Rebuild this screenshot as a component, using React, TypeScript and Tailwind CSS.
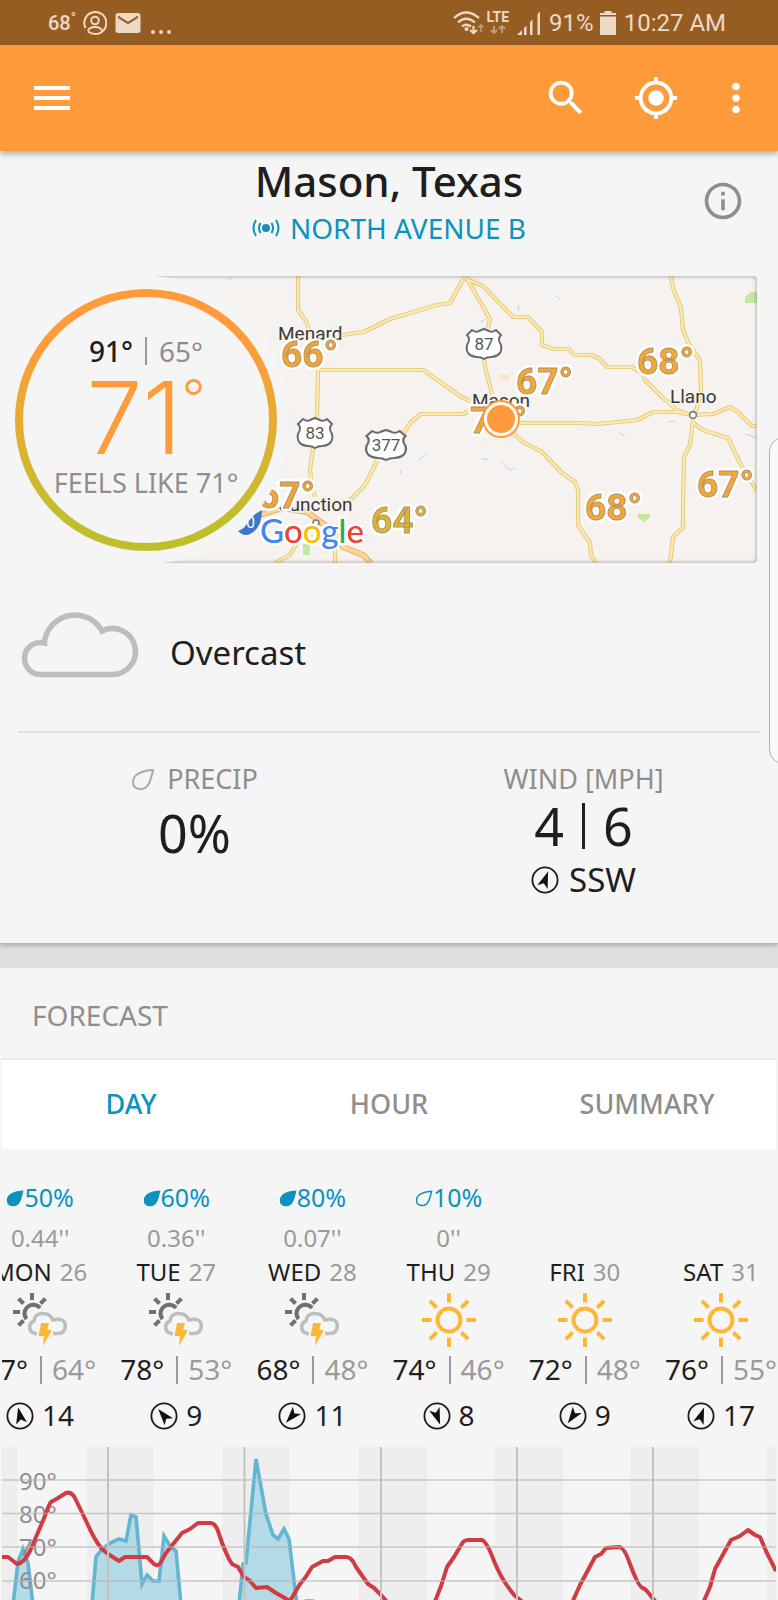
import { useState, type ReactNode } from "react";
import { MdEmail, MdGpsFixed, MdInfoOutline, MdMenu, MdMoreVert, MdSearch } from "react-icons/md";

type Day = {
  name: string;
  date: number;
  chance?: string;
  amount?: string;
  filled?: boolean;
  icon: "storm" | "sun";
  high: number;
  low: number;
  wind: number;
  heading: number;
};

const DAYS: Day[] = [
  { name: "MON", date: 26, chance: "50%", amount: "0.44''", filled: true, icon: "storm", high: 87, low: 64, wind: 14, heading: -12 },
  { name: "TUE", date: 27, chance: "60%", amount: "0.36''", filled: true, icon: "storm", high: 78, low: 53, wind: 9, heading: -40 },
  { name: "WED", date: 28, chance: "80%", amount: "0.07''", filled: true, icon: "storm", high: 68, low: 48, wind: 11, heading: 222 },
  { name: "THU", date: 29, chance: "10%", amount: "0''", icon: "sun", high: 74, low: 46, wind: 8, heading: 160 },
  { name: "FRI", date: 30, icon: "sun", high: 72, low: 48, wind: 9, heading: 215 },
  { name: "SAT", date: 31, icon: "sun", high: 76, low: 55, wind: 17, heading: 20 },
];

const TABS = ["DAY", "HOUR", "SUMMARY"];

const ROADS = [
  "M298 276V310L306 321L310 334",
  "M342 335L364 332L390 319L417 311L437 305L450 303L465 276",
  "M466 277L490 319L488 328",
  "M484 360L486 371L492 394",
  "M466 279L483 286L513 317H528L542 332V345L553 349H569L574 355H591L600 359L607 367H632L643 374L645 380L663 398L677 410L688 414",
  "M671 276L673 288L681 308L683 330L689 344L700 360L701 390L697 408L693 416",
  "M320 370H423L443 384L460 396L470 401",
  "M318 370L317 417",
  "M313 448L310 470L312 487L315 497",
  "M469 411L463 414H421L411 422L403 434",
  "M377 461L365 485L350 500",
  "M520 423H580L597 424L637 420L653 412H677L693 415L713 414L730 407L738 412L752 426H757",
  "M513 433L523 442L542 452L562 473L575 482L578 490V525L590 543L591 555L596 563",
  "M693 420L690 445L684 457L683 503V527L673 537L670 563",
  "M693 423L705 431L728 438L740 463L757 491",
  "M297 543L290 555L275 563",
  "M335 545V563",
];

const STATIONS = [
  { x: 281, y: 367, text: "66°", fill: "#f0a437" },
  { x: 258, y: 508, text: "67°", fill: "#f0a437" },
  { x: 371, y: 533, text: "64°", fill: "#dcb335" },
  { x: 516, y: 394, text: "67°", fill: "#f5a638" },
  { x: 637, y: 374, text: "68°", fill: "#f5a638" },
  { x: 470, y: 433, text: "71°", fill: "#f5a638" },
  { x: 585, y: 520, text: "68°", fill: "#f5a638" },
  { x: 697, y: 497, text: "67°", fill: "#f5a638" },
];

const GOOGLE = [
  ["G", "#4285f4"],
  ["o", "#ea4335"],
  ["o", "#fbbc05"],
  ["g", "#4285f4"],
  ["l", "#34a853"],
  ["e", "#ea4335"],
];

function Drop({ filled, className }: { filled?: boolean; className: string }) {
  return (
    <svg viewBox="0 0 24 24" className={className} aria-hidden="true">
      <path
        d="M22 3C12 3.500 2 7 2 15C2 20 5.500 22 10 22C18 22 20 12 22 3Z"
        fill={filled ? "currentColor" : "none"}
        stroke="currentColor"
        strokeWidth="2"
        strokeLinejoin="miter"
      />
    </svg>
  );
}

function WindArrow({ heading }: { heading: number }) {
  return (
    <svg viewBox="0 0 28 28" className="size-7 shrink-0" aria-hidden="true">
      <circle cx="14" cy="14" r="12.600" fill="none" stroke="#1c1c1c" strokeWidth="1.800" />
      <path d="M14 5L19.500 21.500L14 17.500L8.500 21.500Z" fill="#111" transform={`rotate(${heading} 14 14)`} />
    </svg>
  );
}

function SunIcon() {
  return (
    <svg viewBox="0 0 54 54" className="size-[54px]" aria-hidden="true">
      <g stroke="#fbb735" strokeWidth="4" fill="none">
        <circle cx="27" cy="27" r="11.500" />
        {[0, 45, 90, 135, 180, 225, 270, 315].map((angle) => (
          <path key={angle} d="M27 0V9.500" transform={`rotate(${angle} 27 27)`} />
        ))}
      </g>
    </svg>
  );
}

function StormIcon() {
  return (
    <svg viewBox="0 0 54 54" className="size-[54px]" aria-hidden="true">
      <g stroke="#707070" strokeWidth="4" fill="none">
        <path d="M13.500 26A8.500 8.500 0 1 1 27 15" />
        {[-135, -90, -45, 0, 45].map((angle) => (
          <path key={angle} d="M19 0V7" transform={`rotate(${angle} 19 19)`} />
        ))}
      </g>
      <path
        d="M24 40.500H22A6.500 6.500 0 0 1 21 28Q22 20.500 30 20.500Q37 20.500 40 27Q52 24 52.500 33Q52 40.500 44 40.500H40"
        fill="none"
        stroke="#bdbdbd"
        strokeWidth="3.600"
      />
      <path d="M28 30H36L34 37H39L30 53L31 43H25.500Z" fill="#fbb735" />
    </svg>
  );
}

function RouteShield({ x, y, wide, label }: { x: number; y: number; wide?: boolean; label: string }) {
  const s = wide ? 1.15 : 1;
  return (
    <g transform={`translate(${x} ${y})`}>
      <path
        transform={`scale(${s} 1)`}
        d="M-12 -14Q-8 -11 -5 -13Q-3 -14 0 -15Q3 -14 5 -13Q8 -11 12 -14L17 -9Q13 -5 17 1Q19 12 7 13Q3 13 0 15Q-3 13 -7 13Q-19 12 -17 1Q-13 -5 -17 -9Z"
        fill="#fff"
        stroke="#6a6a6a"
        strokeWidth="2"
      />
      <text y="6" textAnchor="middle" fontSize="17" fill="#555">
        {label}
      </text>
    </g>
  );
}

function StationMap() {
  return (
    <svg
      viewBox="155 276 602 287"
      preserveAspectRatio="xMaxYMid slice"
      className="block h-[287px] w-full rounded-sm bg-[#f6f2ef] font-['Roboto',sans-serif]"
      role="img"
      aria-label="Station map"
    >
      <g fill="#c5e5a3">
        <path d="M745 297L751 292H757V303H745Z" />
        <path d="M638 514H650V517L644 522L638 518Z" />
        <path d="M303 544H310V555H303Z" />
      </g>
      <path d="M499 374L510 375L508 382L500 379Z" fill="#fce4cc" />
      <path
        d="M556 296L560 299M519 311L518 305M480 322L486 319M419 460L427 453M482 459L488 459M500 461L510 470L515 468M400 474L402 469M619 433L625 436M669 422L675 421M745 434L757 438M231 280L228 278"
        stroke="#a9d9ee"
        strokeWidth="1"
        fill="none"
      />
      <g fill="none" strokeLinejoin="round">
        {ROADS.map((d) => <path key={d} d={d} stroke="#e3c877" strokeWidth="4.200" />)}
        {ROADS.map((d) => <path key={d} d={d} stroke="#fbe9b0" strokeWidth="2.400" />)}
        <path d="M260 515L283 508L307 512L333 531L343 547L363 555L371 563" stroke="#e9b46a" strokeWidth="6" />
        <path d="M260 515L283 508L307 512L333 531L343 547L363 555L371 563" stroke="#fbd59a" strokeWidth="3.600" />
      </g>

      <RouteShield x={484} y={344} label="87" />
      <RouteShield x={315} y={433} label="83" />
      <RouteShield x={386} y={445} wide label="377" />
      <path d="M238 531Q246 529 250 517L262 510Q262 528 250 534Q244 537 238 531Z" fill="#3d78c6" />
      <text x="246" y="528" fontSize="16" fill="#fff">0</text>

      <g fontSize="19" fill="#3c3a35" stroke="#f6f2ef" strokeWidth="3" paintOrder="stroke">
        <text x="278" y="340">Menard</text>
        <text x="472" y="407">Mason</text>
        <text x="670" y="403">Llano</text>
        <text x="279" y="511">Junction</text>
      </g>
      <circle cx="693" cy="415" r="3.400" fill="#fff" stroke="#777" strokeWidth="1.600" />
      <circle cx="316" cy="523" r="3" fill="#fff" stroke="#777" strokeWidth="1.600" />

      <g
        fontSize="37"
        fontWeight="700"
        stroke="#a88f63"
        className="[filter:drop-shadow(2px_0_0_#fff)_drop-shadow(-2px_0_0_#fff)_drop-shadow(0_2px_0_#fff)_drop-shadow(0_-2px_0_#fff)]"
      >
        {STATIONS.map((s) => (
          <text key={`${s.x}-${s.y}`} x={s.x} y={s.y} fill={s.fill} strokeWidth="0.800">{s.text}</text>
        ))}
      </g>

      <circle cx="501" cy="419" r="18" fill="#fff" stroke="#ff9b3b" strokeWidth="2" />
      <circle cx="501" cy="419" r="14" fill="#ff9b3b" />

      <text x="260" y="543" fontSize="33" fontWeight="500" stroke="#fff" strokeWidth="5" paintOrder="stroke" className="font-['Lato',sans-serif]">
        {GOOGLE.map(([letter, color], i) => <tspan key={i} fill={color}>{letter}</tspan>)}
      </text>
    </svg>
  );
}

function TemperatureDial() {
  return (
    <div className="absolute top-0 left-0.5 grid size-72 place-items-center rounded-full bg-[#f5f5f5]">
      <div className="size-[262px] rounded-full bg-linear-to-b from-[#ff9b3b] from-20% to-[#bfbf2c] to-90% p-2">
        <div className="flex size-full flex-col items-center rounded-full bg-[#f5f5f5] pt-[38px]">
          <p className="flex items-center gap-3 text-[28px] leading-8">
            <span className="font-medium">91°</span>
            <span className="h-7 w-0.5 bg-[#999]" />
            <span className="text-[#8e8e8e]">65°</span>
          </p>
          <p className="mt-0.5 flex items-start font-['Inter',sans-serif] text-[100px] leading-[98px] font-light text-[#ff9b3b]">
            71<span className="text-[52px] leading-[60px]">°</span>
          </p>
          <p className="text-[27px] leading-8 text-[#8e8e8e]">FEELS LIKE 71°</p>
        </div>
      </div>
    </div>
  );
}

const TEMPERATURE_LINE =
  "M2 1556H8L17 1563Q24 1562 30 1550L45 1515Q49 1503 51 1501L58 1497L66 1492Q72 1490 76 1499L87 1522Q95 1540 102 1548L108 1553L119 1560L125 1556H147L154 1563Q158 1566 161 1561L166 1552L182 1532L190 1528L198 1522H210Q216 1522 219 1533Q226 1554 232 1563L238 1566L244 1576L250 1580L256 1587L267 1586L276 1592L290 1600L300 1583L305 1577L312 1566L323 1560H328L335 1556H346Q352 1556 356 1566L368 1583L374 1587L381 1594L388 1602L410 1625L434 1603L441 1585L447 1566L454 1556L463 1541Q465 1539 468 1539H482Q487 1541 494 1560Q502 1580 515 1595L523 1601L550 1625L572 1602L580 1584L595 1556L601 1553L606 1547L620 1546Q625 1548 630 1563Q639 1587 643 1587L646 1589L655 1600L680 1625L703 1602L710 1586L715 1568L731 1539L740 1535L748 1529L755 1534L760 1536L766 1550L776 1570";

const RAIN_AREAS = [
  "M13 1604L18 1561L23 1548L28 1562L33 1604",
  "M92 1604L96 1556L102 1548L112 1541L119 1538L126 1540L131 1514L136 1516L142 1583L147 1574L153 1580H159L164 1535L170 1545L176 1550L181 1604",
  "M239 1604L243 1563L246 1562L256 1458L266 1513L273 1534L278 1538L284 1528L289 1538L297 1604",
  "M303 1604L306 1600H313L315 1604",
];

function ForecastChart() {
  return (
    <svg
      viewBox="2 1446 774 154"
      preserveAspectRatio="none"
      className="block h-[154px] w-full"
      role="img"
      aria-label="Temperature and precipitation"
    >
      <g fill="#eeeeee">
        {[[2, 16], [87, 67], [222, 68], [358, 69], [495, 68], [630, 69], [767, 9]].map(([x, width]) => (
          <rect key={x} x={x} y="1446" width={width} height="154" />
        ))}
      </g>
      {RAIN_AREAS.map((d) => (
        <path key={d} d={d} fill="#a9d6e3" fillOpacity="0.850" stroke="#62b5d3" strokeWidth="3.600" />
      ))}
      <g fontSize="24" fill="#8e8e8e">
        <text x="19" y="1489">90°</text>
        <text x="19" y="1522">80°</text>
        <text x="19" y="1555">70°</text>
        <text x="19" y="1588">60°</text>
      </g>
      <path d={TEMPERATURE_LINE} fill="none" stroke="#d13b43" strokeWidth="4" strokeLinejoin="round" />
      <g stroke="#b5b5b5" strokeOpacity="0.700" strokeWidth="1.500">
        {[1479, 1512.5, 1546, 1580].map((y) => <path key={y} d={`M2 ${y}H776`} />)}
      </g>
      <g stroke="#c3c3c3" strokeWidth="2">
        {[108, 244.5, 381, 517, 653].map((x) => <path key={x} d={`M${x} 1446V1600`} />)}
      </g>
    </svg>
  );
}

function DayColumn({ day }: { day: Day }) {
  return (
    <li className="flex min-w-0 flex-1 flex-col items-center text-2xl whitespace-nowrap">
      <p className="flex h-9 items-center text-[25px] text-[#0d92bd]">
        {day.chance ? (
          <>
            <Drop filled={day.filled} className="size-[18px]" />
            {day.chance}
          </>
        ) : null}
      </p>
      <p className="mt-1 h-[34px] leading-9 text-[#9a9a9a]">{day.amount}</p>
      <p className="flex h-9 items-center gap-2 leading-9">
        {day.name}
        <span className="text-[#9a9a9a]">{day.date}</span>
      </p>
      <div className="mt-[3px]">{day.icon === "sun" ? <SunIcon /> : <StormIcon />}</div>
      <p className="mt-[3px] flex h-10 items-center text-[28px]">
        {day.high}°
        <span className="mr-2.5 ml-3 h-7 w-0.5 bg-[#999]" />
        <span className="text-[#9a9a9a]">{day.low}°</span>
      </p>
      <p className="mt-2 flex h-9 items-center gap-2 text-[28px]">
        <WindArrow heading={day.heading} />
        {day.wind}
      </p>
    </li>
  );
}

function StatusBar() {
  return (
    <div className="flex h-[45px] items-center bg-[#965d23] pr-[52px] pl-12 font-['Roboto',sans-serif] text-2xl text-[#ecd9c6]">
      <span className="text-xl font-medium">
        68<sup className="text-sm">°</sup>
      </span>
      <svg viewBox="0 0 24 24" className="ml-[7px] size-6" fill="none" stroke="currentColor" strokeWidth="2" aria-hidden="true">
        <path d="M2.500 17A11 11 0 1 1 12 23Q8 23 5 20.500" />
        <circle cx="12" cy="9.500" r="3.800" />
        <path d="M5 20Q6 16 12 16T19 20" />
      </svg>
      <MdEmail className="ml-1.5 size-[30px]" />
      <svg viewBox="0 0 20 20" className="ml-2 size-5 self-end" fill="currentColor" aria-hidden="true">
        <circle cx="2" cy="7" r="2" />
        <circle cx="10" cy="7" r="2" />
        <circle cx="18" cy="7" r="2" />
      </svg>

      <div className="ml-auto flex items-center">
        <svg viewBox="0 0 32 24" className="h-6 w-8" fill="none" stroke="currentColor" strokeWidth="2.200" aria-hidden="true">
          <path d="M1 7Q13 -4 26 7M5 11.500Q13 4 22 11.500M9 15.500Q13 12 18 15.500" />
          <circle cx="13.500" cy="18" r="1" fill="currentColor" />
          <path d="M20.500 15V22M17 19L20.500 22L24 19" />
          <path d="M28 21V14M25.500 16.500L28 14L30.500 16.500" strokeOpacity="0.500" strokeWidth="1.600" />
        </svg>
        <span className="ml-0.5 flex flex-col items-center text-sm leading-3 font-bold">
          LTE
          <svg viewBox="0 0 16 9" className="mt-0.5 h-[9px] w-4" fill="none" stroke="currentColor" strokeWidth="2" opacity="0.500" aria-hidden="true">
            <path d="M4 1V7M1 5L4 8L7 5M12 8V2M9 4L12 1L15 4" />
          </svg>
        </span>
        <svg viewBox="0 0 24 24" className="ml-2 size-6" fill="currentColor" aria-hidden="true">
          <path d="M0 24L5 19V24ZM7 17L9.500 14.500V24H7ZM13 11L15.500 8.500V24H13ZM20.500 3L23 0.500V24H20.500Z" />
        </svg>
        <span className="ml-2">91%</span>
        <svg viewBox="0 0 16 24" className="ml-1.5 h-6 w-4" fill="currentColor" aria-hidden="true">
          <path d="M4.500 0H11.500V2H16V4H0V2H4.500ZM0 5.500H16V24H0Z" />
        </svg>
        <span className="ml-2">10:27 AM</span>
      </div>
    </div>
  );
}

function IconButton({ label, className = "", children }: { label: string; className?: string; children: ReactNode }) {
  return (
    <button type="button" aria-label={label} className={className}>
      {children}
    </button>
  );
}

export default function App() {
  const [tab, setTab] = useState("DAY");

  return (
    <div className="relative min-h-screen overflow-hidden bg-[#f5f5f5] font-['Noto_Sans',sans-serif] text-[#1e1e1e]">
      <StatusBar />
      <header className="relative flex h-[106px] items-center bg-[#ff9b3b] pr-[19px] pl-7 text-white shadow-[0_3px_6px_rgba(0,0,0,0.3)]">
        <IconButton label="Menu">
          <MdMenu className="size-12" />
        </IconButton>
        <IconButton label="Search" className="ml-auto">
          <MdSearch className="size-[46px]" />
        </IconButton>
        <IconButton label="My location" className="ml-11">
          <MdGpsFixed className="size-[46px]" />
        </IconButton>
        <IconButton label="More options" className="ml-[34px]">
          <MdMoreVert className="size-[46px]" />
        </IconButton>
      </header>

      <main>
        <section className="relative border-b border-[#b5b5b5] pb-[38px] shadow-[0_2px_4px_rgba(0,0,0,0.2)]">
          <div className="relative pt-[3px] text-center">
            <h1 className="text-[42px] leading-[54px] font-medium">Mason, Texas</h1>
            <a href="#station" className="mt-0.5 flex items-center justify-center gap-2.5 text-[28px] leading-9 text-[#0d92bd]">
              <svg viewBox="0 0 28 20" className="h-5 w-7" fill="none" stroke="currentColor" strokeWidth="2" aria-hidden="true">
                <circle cx="14" cy="10" r="4" fill="currentColor" stroke="none" />
                <path d="M8.500 5Q5.500 10 8.500 15M4 2Q-1 10 4 18M19.500 5Q22.500 10 19.500 15M24 2Q29 10 24 18" />
              </svg>
              NORTH AVENUE B
            </a>
            <IconButton label="Station info" className="absolute top-7 right-[33px] text-[#8e8e8e]">
              <MdInfoOutline className="size-11" />
            </IconButton>
          </div>

          <div className="relative mt-[30px] pr-[21px] pl-[155px]">
            <div className="relative">
              <StationMap />
              <div className="pointer-events-none absolute inset-0 rounded-sm shadow-[inset_0_0_4px_rgba(0,0,0,0.4)]" />
            </div>
            <TemperatureDial />
          </div>

          <div className="flex items-center px-5 pt-[43px]">
            <svg viewBox="20 606 120 72" className="h-[72px] w-[120px]" fill="none" stroke="#bdbdbd" strokeWidth="5.500" aria-hidden="true">
              <path d="M41 674.500H113A23 23 0 1 0 102 631A31 31.500 0 0 0 44.500 641V643A16 16 0 1 0 41 674.500Z" />
            </svg>
            <p className="ml-[30px] pt-[22px] text-[33px] leading-10">Overcast</p>
          </div>

          <hr className="mx-[18px] mt-[53px] border-t-2 border-[#e0e0e0]" />

          <div className="grid grid-cols-2 text-center">
            <div className="pt-[26px]">
              <p className="flex items-center justify-center gap-3 text-[27px] leading-10 text-[#8e8e8e]">
                <Drop className="size-6 text-[#aaa]" />
                PRECIP
              </p>
              <p className="mt-1 text-[52px] leading-[60px]">0%</p>
            </div>
            <div className="pt-[26px]">
              <p className="text-[27px] leading-10 text-[#8e8e8e]">WIND [MPH]</p>
              <p className="flex items-center justify-center gap-[18px] text-[52px] leading-[54px]">
                4
                <span className="h-[46px] w-[3px] bg-[#1e1e1e]" />
                6
              </p>
              <p className="mt-0.5 flex items-center justify-center gap-2.5 text-[33px] leading-[50px]">
                <WindArrow heading={20} />
                SSW
              </p>
            </div>
          </div>
        </section>

        <div className="h-6 bg-[#dedede]" />

        <section>
          <h2 className="px-8 pt-[30px] pb-[26px] text-[28px] leading-[34px] text-[#8e8e8e]">FORECAST</h2>
          <div role="tablist" className="mx-0.5 grid grid-cols-3 border-t-2 border-[#e8e8e8] bg-white">
            {TABS.map((name) => (
              <button
                key={name}
                type="button"
                role="tab"
                aria-selected={tab === name}
                onClick={() => setTab(name)}
                className={`h-[89px] text-[27px] font-medium ${tab === name ? "text-[#0d92bd]" : "text-[#8e8e8e]"}`}
              >
                {name}
              </button>
            ))}
          </div>

          <div className="mx-0.5 overflow-hidden pt-[31px]">
            <ul className="-mr-[13px] -ml-[30px] flex">
              {DAYS.map((day) => <DayColumn key={day.name} day={day} />)}
            </ul>
            <div className="mt-[13px]">
              <ForecastChart />
            </div>
          </div>
        </section>
      </main>

      <div className="absolute top-[437px] -right-5 h-[327px] w-[29px] rounded-2xl border border-[#b0b0b0] bg-[#fafafa]" />
    </div>
  );
}
